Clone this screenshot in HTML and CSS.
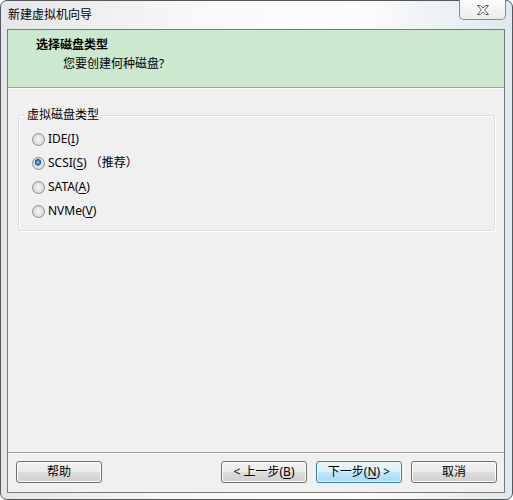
FILE: index.html
```html
<!DOCTYPE html>
<html lang="zh-CN">
<head>
    <meta charset="UTF-8">
    <title>新建虚拟机向导</title>
    <link rel="stylesheet" href="styles.css">
</head>
<body>
    <div class="window">
        <div class="titlebar">
            <span class="title">新建虚拟机向导</span>
            <button class="close" type="button" aria-label="关闭">
                <svg width="14" height="10" viewBox="0 0 14 10">
                    <path d="M1.5 0.5 H4.5 L7 3.2 L9.5 0.5 H12.5 L8.6 5 L12.5 9.5 H9.5 L7 6.8 L4.5 9.5 H1.5 L5.4 5 Z"
                          fill="#fff" stroke="#5b5b5b" stroke-width="1" stroke-linejoin="round"/>
                </svg>
            </button>
        </div>

        <div class="client">
            <!-- Wizard header -->
            <div class="header">
                <div class="heading">选择磁盘类型</div>
                <div class="subheading">您要创建何种磁盘?</div>
            </div>

            <div class="content">
                <fieldset class="group">
                    <legend>虚拟磁盘类型</legend>
                    <label class="option"><input type="radio" name="disk"> IDE(<u>I</u>)</label>
                    <label class="option"><input type="radio" name="disk" checked> SCSI(<u>S</u>) （推荐）</label>
                    <label class="option"><input type="radio" name="disk"> SATA(<u>A</u>)</label>
                    <label class="option"><input type="radio" name="disk"> NVMe(<u>V</u>)</label>
                </fieldset>
            </div>

            <!-- Buttons -->
            <div class="footer">
                <button type="button" class="btn">帮助</button>
                <span class="spacer"></span>
                <button type="button" class="btn">&lt; 上一步(<u>B</u>)</button>
                <button type="button" class="btn default">下一步(<u>N</u>) &gt;</button>
                <button type="button" class="btn">取消</button>
            </div>
        </div>
    </div>
</body>
</html>
```

FILE: styles.css
```css
/* Page */
html, body {
    margin: 0;
    padding: 0;
}
body {
    width: 513px;
    height: 500px;
    font-family: "Noto Sans", "Noto Sans CJK SC", sans-serif;
    font-size: 12px;
    line-height: 16px;
    color: #000;
    background: #fff;
}

/* Window frame */
.window {
    box-sizing: border-box;
    width: 513px;
    height: 500px;
    padding: 0 7px 6px 6px;
    border: 1px solid #575757;
    border-radius: 7px;
    background: linear-gradient(to right, #e4e6e9, #f9f9f9 40%, #fcfcfc 70%, #dfe9ef);
    display: flex;
    flex-direction: column;
}
.titlebar {
    height: 28px;
    display: flex;
    align-items: flex-start;
}
.title {
    margin: 6px 0 0 1px;
    color: #000;
}
.close {
    margin: -1px -1px 0 auto;
    width: 47px;
    height: 20px;
    padding: 0;
    border: 1px solid #8a8a8a;
    border-top: none;
    border-radius: 0 0 5px 5px;
    background: linear-gradient(#fbfbfb, #ededed);
    display: flex;
    align-items: center;
    justify-content: center;
}

/* Client area */
.client {
    box-sizing: border-box;
    height: 464px;
    border: 1px solid #7a7a7a;
    background: #f0f0f0;
    display: flex;
    flex-direction: column;
}
.header {
    box-sizing: border-box;
    height: 58px;
    padding: 7px 0 0 28px;
    background: #cce8cf;
    border-bottom: 1px solid #a0a0a0;
    box-shadow: 0 1px 0 #fff;
}
.heading {
    font-weight: bold;
}
.subheading {
    margin: 3px 0 0 27px;
}

.content {
    flex: 1;
    padding: 18px 9px 0 10px;
    margin-top: 1px;
}

/* Group box */
.group {
    margin: 0;
    padding: 4px 0 7px 6px;
    border: 1px solid #d5dfe5;
    border-radius: 3px;
    box-shadow: inset 1px 1px 0 #fff, 1px 1px 0 #fff;
}
.group legend {
    margin: 0;
    padding: 0 2px;
}
.option {
    height: 24px;
    margin-left: 7px;
    display: flex;
    align-items: center;
}
.option input {
    appearance: none;
    -webkit-appearance: none;
    width: 13px;
    height: 13px;
    margin: 0 3px 0 0;
    border: 1px solid #8f8f8f;
    border-radius: 50%;
    background: radial-gradient(circle at 50% 50%, #f6f6f6 0, #e2e2e2 4px, #d2d2d2 6px);
}
.option input:checked {
    background:
        radial-gradient(circle at 45% 40%, #a7dcf7 0, #3d8fd0 1.5px, #17508c 3px, transparent 3.5px),
        radial-gradient(circle at 50% 50%, #f6f6f6 0, #e2e2e2 4px, #d2d2d2 6px);
}
u {
    text-underline-offset: 2px;
}

/* Button bar */
.footer {
    box-sizing: border-box;
    height: 40px;
    padding: 8px 7px 8px 8px;
    border-top: 1px solid #a0a0a0;
    box-shadow: inset 0 1px 0 #fff;
    display: flex;
    align-items: flex-start;
    gap: 9px;
}
.spacer {
    flex: 1;
}
.btn {
    width: 86px;
    height: 22px;
    padding: 0;
    font: inherit;
    color: #000;
    border: 1px solid #707070;
    border-radius: 3px;
    background: linear-gradient(#f2f2f2, #ebebeb 50%, #dddddd 51%, #cfcfcf);
    box-shadow: inset 0 0 0 1px #fcfcfc;
}
.btn.default {
    border-color: #3c7fb1;
    background: linear-gradient(#eaf6fd, #d9f0fc 50%, #bee6fd 51%, #a7d9f5);
    box-shadow: inset 0 0 0 1px #e4f4fc;
}
```
